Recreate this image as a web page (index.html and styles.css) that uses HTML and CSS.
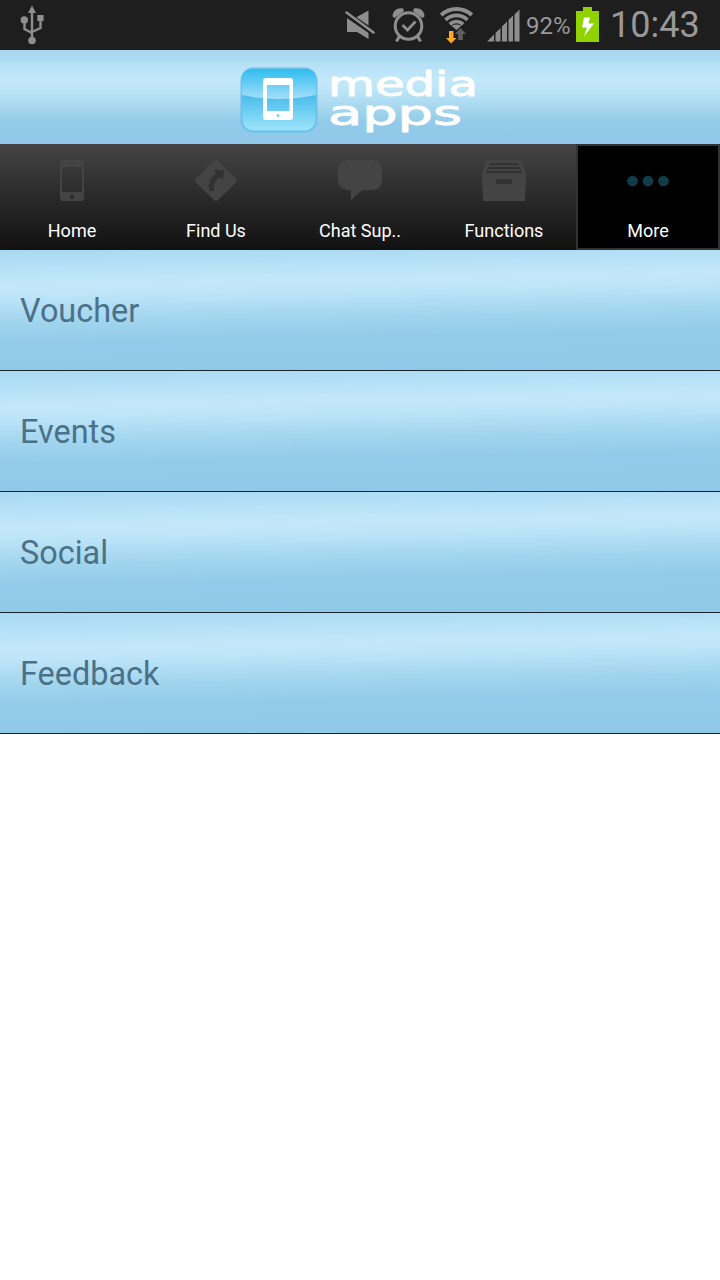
FILE: index.html
```html
<!DOCTYPE html>
<html lang="en">
<head>
    <meta charset="UTF-8">
    <meta name="viewport" content="width=device-width, initial-scale=1.0">
    <title>Media Apps</title>
    <link rel="stylesheet" href="styles.css">
</head>
<body>

    <div class="status-bar">
        <svg class="usb" width="24" height="40" viewBox="0 0 24 40">
            <path d="M12 34V5M12 28L4.500 24V15M12 27L20.500 23V14" fill="none" stroke="#8e8e8e" stroke-width="2.400"/>
            <path d="M12 0.500L16 8H8Z"/>
            <circle cx="4.300" cy="15" r="3.700"/>
            <rect x="17.300" y="10" width="6.300" height="6"/>
            <circle cx="12" cy="35.500" r="3.800"/>
        </svg>
        <svg class="mute" width="31" height="30" viewBox="0 0 31 30">
            <path d="M2 8H10L23.500 0.500V29L12 22H2Z"/>
            <path d="M0 3L29 23" stroke="#1e1e1e" stroke-width="6"/>
            <path d="M1.500 2.500L28.500 22.500" stroke="#8e8e8e" stroke-width="2.600" stroke-linecap="round"/>
        </svg>
        <svg class="alarm" width="34" height="36" viewBox="0 0 34 36">
            <g fill="none" stroke="#8e8e8e">
                <circle cx="16.500" cy="19" r="13.300" stroke-width="3"/>
                <path d="M10.500 18L15.500 23L23.500 14.500" stroke-width="2.800"/>
                <path d="M7.500 29L4.500 34.500M25.500 29L28.500 34.500" stroke-width="3"/>
            </g>
            <path d="M0.500 9.500C0.500 4 5 0.500 11 1.500L12 4L2.500 11Z"/>
            <path d="M32.500 9.500C32.500 4 28 0.500 22 1.500L21 4L30.500 11Z"/>
        </svg>
        <svg class="wifi" width="34" height="37" viewBox="0 0 34 37">
            <g fill="none" stroke="#8e8e8e" stroke-width="3.800">
                <path d="M1.200 8C10 0 23 0 31.800 8"/>
                <path d="M5.500 12.800C12 7 21 7 27.500 12.800"/>
                <path d="M9.800 17.300C14 13.600 19 13.600 23.200 17.300"/>
            </g>
            <path d="M11.500 18.800Q16.500 16.200 21.500 18.800L16.500 23Z"/>
            <path d="M20.500 21L26 27H22.800V33H18.200V27H15Z" fill="#5e5e5e"/>
            <path d="M9 24H13.500V31H16.500L11.200 36.500L6 31H9Z" fill="#ffa726"/>
        </svg>
        <svg class="signal" width="33" height="33" viewBox="0 0 33 33">
            <path d="M0 32.500L7 25.500V32.500ZM8.500 24L13.500 19V32.500H8.500ZM15 17.500L20 12.500V32.500H15ZM21.500 11L26 6.500V32.500H21.500ZM27.500 5.500L32.500 0.500V32.500H27.500Z"/>
        </svg>
        <span class="percent">92%</span>
        <svg class="battery" width="23" height="35" viewBox="0 0 23 35">
            <path d="M0 4H7V0H16V4H23V35H0Z" fill="#90d300"/>
            <path d="M8 10.500H14L12.500 16.500H18L8 29.500L11 20.500H6Z" fill="#fff"/>
        </svg>
        <span class="clock">10:43</span>
    </div>

    <div class="header">
        <svg class="logo" width="240" height="94" viewBox="0 -16 240 94">
            <defs>
                <linearGradient id="shine" x1="0" y1="0" x2="0" y2="1">
                    <stop offset="0" stop-color="#2fbdf0"/>
                    <stop offset="1" stop-color="#a5def8"/>
                </linearGradient>
                <linearGradient id="base" x1="0" y1="0" x2="0" y2="1">
                    <stop offset="0.400" stop-color="#45baeb"/>
                    <stop offset="1" stop-color="#a0e6fb"/>
                </linearGradient>
            </defs>
            <rect x="1.500" y="2.500" width="75" height="63" rx="12" fill="url(#base)" stroke="#67c2ec" stroke-width="2"/>
            <path d="M2 29V14Q2 3 13 3H65Q76 3 76 14V29Q39 37 2 29Z" fill="url(#shine)"/>
            <path class="phone" fill-rule="evenodd" d="M26 12H50Q53 12 53 15V51Q53 54 50 54H26Q23 54 23 51V15Q23 12 26 12ZM27 19V45H49.500V19ZM36.500 49.500A1.500 1.500 0 1 0 39.500 49.500A1.500 1.500 0 1 0 36.500 49.500Z"/>
            <text x="88" y="29.500" textLength="150" lengthAdjust="spacingAndGlyphs">media</text>
            <text x="88" y="58.500" textLength="134" lengthAdjust="spacingAndGlyphs">apps</text>
        </svg>
    </div>

    <div class="tabs">
        <div class="tab">
            <svg width="48" height="48" viewBox="0 0 48 48">
                <path fill-rule="evenodd" d="M15 4H33Q36 4 36 7V42Q36 45 33 45H15Q12 45 12 42V7Q12 4 15 4ZM14 11V36H34V11ZM22 41A2 2 0 1 0 26 41A2 2 0 1 0 22 41ZM20 7V8H28V7Z"/>
            </svg>
            <span>Home</span>
        </div>
        <div class="tab">
            <svg width="48" height="48" viewBox="0 0 48 48">
                <path d="M22 5Q24 3 26 5L44 22.500Q46 24.500 44 26.500L26 44Q24 46 22 44L4 26.500Q2 24.500 4 22.500Z"/>
                <path class="cut" d="M17 35C16 27 18 21 24 18L22 14H32L31 24L28 21C23 24 22 28 22 35Z"/>
            </svg>
            <span>Find Us</span>
        </div>
        <div class="tab">
            <svg width="48" height="48" viewBox="0 0 48 48">
                <path d="M11 4H37Q46 5 46 14V24Q46 33 37 34H27Q20 38 15 45V34H12Q2 33 2 24V14Q2 5 11 4Z"/>
            </svg>
            <span>Chat Sup..</span>
        </div>
        <div class="tab">
            <svg width="48" height="48" viewBox="0 0 48 48">
                <path d="M9 4H39Q41 4 42 6L46 17V20L45 45H3L2 20V17L6 6Q7 4 9 4Z"/>
                <path class="cut" d="M10 7H38L42 17H6ZM16 23H32V28H16Z"/>
                <path d="M9 9H39V11H9ZM8 13H40V15H8Z"/>
            </svg>
            <span>Functions</span>
        </div>
        <div class="tab active">
            <svg width="48" height="48" viewBox="0 0 48 48">
                <circle cx="8.500" cy="25" r="5.300"/>
                <circle cx="24" cy="25" r="5.300"/>
                <circle cx="39.500" cy="25" r="5.300"/>
            </svg>
            <span>More</span>
        </div>
    </div>

    <div class="menu">
        <div class="item">Voucher</div>
        <div class="item">Events</div>
        <div class="item">Social</div>
        <div class="item">Feedback</div>
    </div>

</body>
</html>
```
FILE: styles.css
```css
* { box-sizing: border-box; }
body {
    margin: 0;
    background-color: #fff;
    font-family: Roboto, sans-serif;
}
svg { display: block; flex: none; }

/* Phone status bar */
.status-bar {
    display: flex;
    height: 50px;
    padding-left: 20px;
    background-color: #1e1e1e;
    color: #999;
    fill: #8e8e8e;
}
.usb { margin-top: 5px; }
.mute { margin: 10px 0 0 301px; }
.alarm { margin: 7px 0 0 16px; }
.wifi { margin: 7px 0 0 14px; }
.signal { margin: 9px 0 0 13px; }
.percent {
    width: 50px;
    margin-left: 6px;
    font-size: 24px;
    line-height: 52px;
}
.battery { margin: 7px 0 0 0; }
.clock {
    margin-left: 11px;
    font-size: 36px;
    line-height: 50px;
}

/* Glossy blue header */
.header {
    display: flex;
    justify-content: center;
    height: 94px;
    background: linear-gradient(#a8d8ee 0%, #afd6f3 6%, #a9def0 10%, #b6e0f6 14%, #c3e8fa 32%, #bde5f8 43%, #a3d5ed 64%, #92cae9 78%, #90c9e9 100%);
}
.logo text {
    fill: #fff;
    font-family: "DejaVu Sans", sans-serif;
    font-size: 34px;
    stroke: #fff;
    stroke-width: 0.9px;
}
.phone { fill: #fff; }

/* Tabs */
.tabs {
    display: grid;
    grid-template-columns: repeat(5, 1fr);
    height: 106px;
    background: linear-gradient(#444, #111);
}
.tab {
    display: flex;
    flex-direction: column;
    align-items: center;
    padding-top: 12px;
    color: #fff;
    fill: #444;
    font-size: 18px;
}
.tab span {
    margin-top: 16px;
    line-height: 22px;
}
.cut { fill: #323232; }
.active {
    padding-top: 10px;
    border: 2px solid #333;
    background-color: #000;
    fill: #123c4a;
}

/* Menu list */
.item {
    height: 121px;
    padding-left: 20px;
    border-bottom: 1px solid #15252e;
    background: linear-gradient(179deg, #a9d9f3 0%, #b4e0f6 12%, #c4e8fa 27%, #bce4f8 36%, #a3d6ef 53%, #92cbe9 70%, #90c9e8 100%);
    color: #4b7188;
    font-size: 32.4px;
    line-height: 122px;
}
```
